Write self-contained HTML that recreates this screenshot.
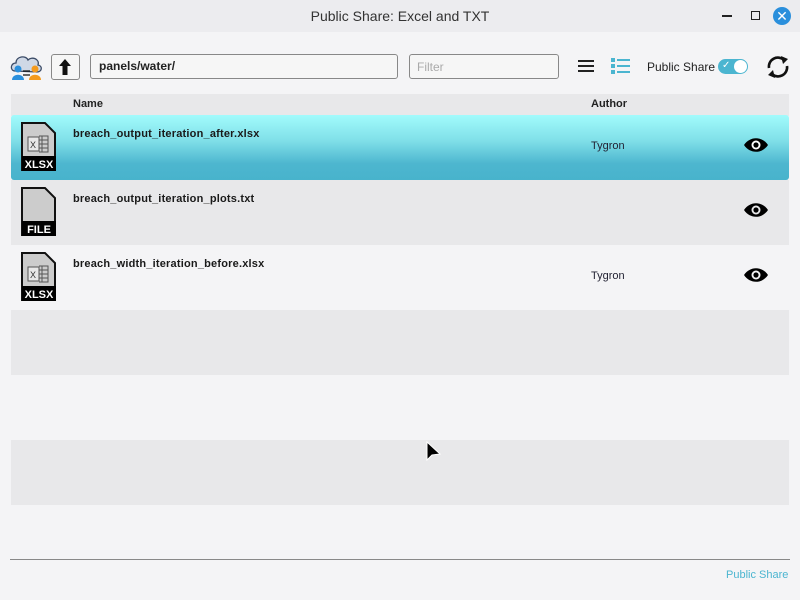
<!DOCTYPE html>
<html><head><style>
*{margin:0;padding:0;box-sizing:border-box}
body{width:800px;height:600px;background:#f4f4f6;font-family:"Liberation Sans",sans-serif;position:relative;overflow:hidden;color:#222}
.abs{position:absolute}
.title{left:0;top:0;width:800px;height:32px;background:#ececef;text-align:center;font-size:14px;line-height:32px;color:#333}
.row{position:absolute;left:11px;width:778px;height:65px}
.name{position:absolute;left:62px;top:13px;font-size:11px;font-weight:bold;color:#1a1a1a;letter-spacing:0.2px}
.auth{position:absolute;left:580px;top:25px;font-size:11px;color:#223}
.eye{position:absolute;left:732px;top:21px}
.ficon{position:absolute;left:10px;top:7px}
</style></head><body>
<div class="abs title">Public Share: Excel and TXT</div>
<div class="abs" style="left:722px;top:15px;width:10px;height:1.5px;background:#222"></div>
<div class="abs" style="left:751px;top:11px;width:9px;height:9px;border:1.5px solid #222"></div>
<div class="abs" style="left:773px;top:7px;width:18px;height:18px;border-radius:50%;background:#2a8fdc;color:#fff;font-size:14px;line-height:18px;text-align:center">✕</div>

<svg class="abs" style="left:9px;top:53px" width="34" height="28" viewBox="0 0 34 28">
<path d="M6 18 C1 18 1 10 7 10 C7 3 17 2 19 7 C23 3 31 6 29 12 C34 13 33 19 28 19 Z" fill="#cfd8e6" stroke="#3a4a66" stroke-width="1.3"/>
<circle cx="9" cy="16" r="3.5" fill="#2a8fdc"/><path d="M3 27 C3 20 15 20 15 27Z" fill="#2a8fdc"/>
<circle cx="26" cy="16" r="3.5" fill="#f39a1e"/><path d="M20 27 C20 20 32 20 32 27Z" fill="#f39a1e"/>
<path d="M14 18 H21 M14 22 H21" stroke="#111" stroke-width="1.2"/>
</svg>
<div class="abs" style="left:51px;top:54px;width:29px;height:26px;border:1px solid #888;border-radius:3px;background:#f6f6f6"></div>
<svg class="abs" style="left:58px;top:58px" width="14" height="18"><path d="M7 1 L13 8 H9.5 V17 H4.5 V8 H1Z" fill="#111"/></svg>
<div class="abs" style="left:90px;top:54px;width:308px;height:25px;border:1px solid #888;border-radius:3px;background:#f6f6f6;font-size:12px;font-weight:bold;line-height:23px;padding-left:8px">panels/water/</div>
<div class="abs" style="left:409px;top:54px;width:150px;height:25px;border:1px solid #888;border-radius:3px;background:#f6f6f6;font-size:12px;color:#aaa;line-height:24px;padding-left:7px">Filter</div>
<div class="abs" style="left:578px;top:60px;width:16px;height:2px;background:#222;box-shadow:0 5px 0 #222,0 10px 0 #222"></div>
<svg class="abs" style="left:611px;top:58px" width="19" height="16"><g fill="#4bb5d0"><rect x="0" y="0" width="4" height="4"/><rect x="0" y="6" width="4" height="4"/><rect x="0" y="12" width="4" height="4"/><rect x="6" y="1" width="13" height="2"/><rect x="6" y="7" width="13" height="2"/><rect x="6" y="13" width="13" height="2"/></g></svg>
<div class="abs" style="left:647px;top:60px;font-size:12px;color:#222">Public Share</div>
<div class="abs" style="left:718px;top:59px;width:30px;height:15px;border-radius:8px;background:#4bb5d0"></div>
<div class="abs" style="left:734px;top:60px;width:13px;height:13px;border-radius:50%;background:#fff"></div>
<div class="abs" style="left:722px;top:60px;color:#fff;font-size:10px">✓</div>
<svg class="abs" style="left:765px;top:54px" width="26" height="26" viewBox="0 0 26 26"><g fill="none" stroke="#111" stroke-width="2.6"><path d="M4 14 A9 9 0 0 1 19 6"/><path d="M22 12 A9 9 0 0 1 7 20"/></g><path d="M16 2 L23 5 L18 10Z M10 24 L3 21 L8 16Z" fill="#111"/></svg>

<div class="abs" style="left:11px;top:94px;width:778px;height:22px;background:#e8e8ea"></div>
<div class="abs" style="left:73px;top:98px;font-size:11px;font-weight:bold">Name</div>
<div class="abs" style="left:591px;top:98px;font-size:11px;font-weight:bold">Author</div>

<div class="row" style="top:115px;background:linear-gradient(#a2fbfc,#7fdfe8 40%,#4db6cf 75%,#48b3cc);border-radius:3px">
<svg class="ficon" width="36" height="50"><path d="M1 1 H24 L34 11 V48 H1Z" fill="#ccc" stroke="#111" stroke-width="2"/><rect x="1" y="34" width="34" height="15" fill="#000"/><text x="18" y="46" font-size="11" font-weight="bold" fill="#fff" text-anchor="middle" font-family="Liberation Sans">XLSX</text><rect x="7" y="15" width="11" height="14" fill="#e8e8e8" stroke="#555"/><text x="12" y="26" font-size="9" text-anchor="middle" fill="#333">X</text><path d="M18 14 H27 V30 H18 M21 14V30 M18 18H27 M18 22H27 M18 26H27" fill="none" stroke="#555"/></svg>
<div class="name">breach_output_iteration_after.xlsx</div><div class="auth">Tygron</div>
<svg class="eye" width="26" height="18"><path d="M1 9 C7 0 19 0 25 9 C19 18 7 18 1 9Z" fill="#000"/><circle cx="13" cy="9" r="4.5" fill="#fff"/><circle cx="13" cy="9" r="2.6" fill="#000"/></svg></div>

<div class="row" style="top:180px;background:#e8e8ea">
<svg class="ficon" width="36" height="50"><path d="M1 1 H24 L34 11 V48 H1Z" fill="#ccc" stroke="#111" stroke-width="2"/><rect x="1" y="34" width="34" height="15" fill="#000"/><text x="18" y="46" font-size="11" font-weight="bold" fill="#fff" text-anchor="middle" font-family="Liberation Sans">FILE</text></svg>
<div class="name">breach_output_iteration_plots.txt</div>
<svg class="eye" width="26" height="18"><path d="M1 9 C7 0 19 0 25 9 C19 18 7 18 1 9Z" fill="#000"/><circle cx="13" cy="9" r="4.5" fill="#e8e8ea"/><circle cx="13" cy="9" r="2.6" fill="#000"/></svg></div>

<div class="row" style="top:245px">
<svg class="ficon" width="36" height="50"><path d="M1 1 H24 L34 11 V48 H1Z" fill="#ccc" stroke="#111" stroke-width="2"/><rect x="1" y="34" width="34" height="15" fill="#000"/><text x="18" y="46" font-size="11" font-weight="bold" fill="#fff" text-anchor="middle" font-family="Liberation Sans">XLSX</text><rect x="7" y="15" width="11" height="14" fill="#e8e8e8" stroke="#555"/><text x="12" y="26" font-size="9" text-anchor="middle" fill="#333">X</text><path d="M18 14 H27 V30 H18 M21 14V30 M18 18H27 M18 22H27 M18 26H27" fill="none" stroke="#555"/></svg>
<div class="name">breach_width_iteration_before.xlsx</div><div class="auth">Tygron</div>
<svg class="eye" width="26" height="18"><path d="M1 9 C7 0 19 0 25 9 C19 18 7 18 1 9Z" fill="#000"/><circle cx="13" cy="9" r="4.5" fill="#f4f4f6"/><circle cx="13" cy="9" r="2.6" fill="#000"/></svg></div>

<div class="row" style="top:310px;background:#e8e8ea"></div>
<div class="row" style="top:440px;background:#e8e8ea"></div>
<svg class="abs" style="left:426px;top:441px" width="16" height="22"><path d="M1 1 L1 19 L6 14 L14 13Z" fill="#000" stroke="#fff" stroke-width="1"/></svg>

<div class="abs" style="left:10px;top:559px;width:780px;height:1px;background:#888"></div>
<div class="abs" style="left:726px;top:569px;font-size:11px;color:#4bb5d0">Public Share</div>
</body></html>
